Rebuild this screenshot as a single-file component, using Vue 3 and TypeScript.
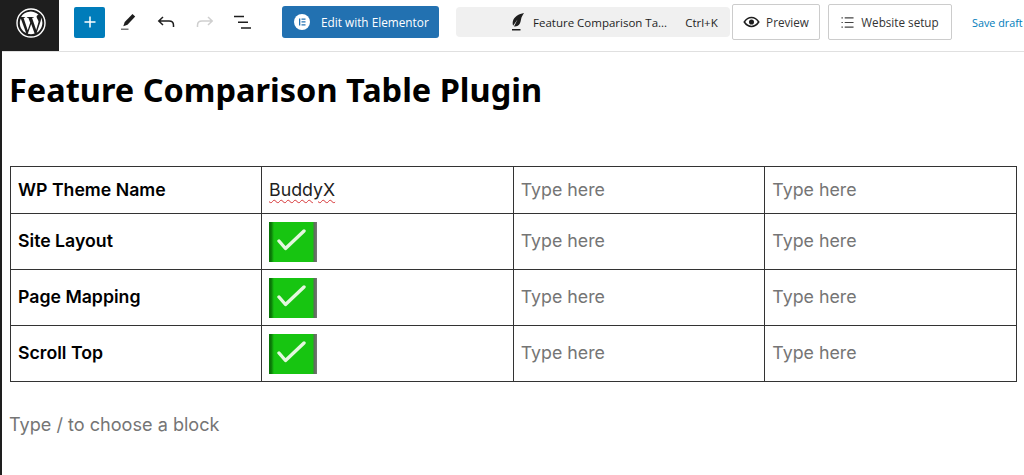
<script setup lang="ts">
const rows = [
  { name: 'Site Layout' },
  { name: 'Page Mapping' },
  { name: 'Scroll Top' },
];
</script>

<template>
  <div class="editor">
    <header class="topbar">
      <a class="wp-logo">
        <svg width="36" height="36" viewBox="0 0 36 36">
          <circle cx="18" cy="18" r="14" fill="none" stroke="#fff" stroke-width="1.4" />
          <path fill="#fff" d="M6.8 18c0 4.4 2.6 8.3 6.3 10.1L7.8 13.4A11 11 0 0 0 6.8 18zm18.8-.6c0-1.4-.5-2.3-.9-3-.6-.9-1.1-1.7-1.1-2.6 0-1 .8-2 1.9-2h.1A11.2 11.2 0 0 0 8.1 12h.7c1.2 0 3-.1 3-.1.6 0 .7.8.1.9 0 0-.6.1-1.3.1l4.1 12.3 2.5-7.5-1.8-4.8c-.6 0-1.2-.1-1.2-.1-.6 0-.5-.9.1-.9 0 0 1.9.1 3 .1s3-.1 3-.1c.6 0 .7.8.1.9 0 0-.6.1-1.3.1l4.1 12.2 1.1-3.8c.5-1.6.9-2.7.9-3.700zm-7.400 1.600L14.800 28.800a11.200 11.200 0 0 0 6.900-.2l-.1-.1zm9.700-6.400c0 .4.1.8.1 1.200 0 1.100-.2 2.400-.9 4l-3.400 9.900A11.200 11.200 0 0 0 28 12.600z" />
        </svg>
      </a>
      <div class="tools">
        <button class="add-btn">
          <svg width="16" height="16" viewBox="0 0 16 16"><path d="M8 2.500v11M2.500 8h11" stroke="#fff" stroke-width="1.500" /></svg>
        </button>
        <svg class="tool pen" width="24" height="24" viewBox="0 0 24 24"><path fill="#1e1e1e" d="M17.500 4 20.200 6.600 12.500 14.800 8.300 16.300 9.700 12z" /><path fill="#777" d="M6 18.500h7.500V20H6z" /></svg>
        <svg class="tool" width="24" height="24" viewBox="0 0 24 24"><path fill="none" stroke="#1e1e1e" stroke-width="1.500" d="M9 7 4.800 11 9 15M4.800 11H15c2.800 0 4.500 1.700 4.500 4.200V17" /></svg>
        <svg class="tool" width="24" height="24" viewBox="0 0 24 24"><path fill="none" stroke="#cfcfcf" stroke-width="1.500" d="M15 7 19.200 11 15 15M19.200 11H9c-2.800 0-4.500 1.700-4.500 4.200V17" /></svg>
        <svg class="tool list" width="24" height="24" viewBox="0 0 24 24"><path fill="none" stroke="#1e1e1e" stroke-width="1.500" d="M4 6.500h10M8 12.200h10M11 18h10" /></svg>
      </div>
      <button class="elementor-btn">
        <span class="el-icon"><svg width="14" height="14" viewBox="0 0 14 14"><path fill="#2271b1" d="M4 3.500h1.300v7H4zM6.500 3.500H10.500v1.300h-4zM6.500 6.300H10.500v1.300h-4zM6.500 9.200H10.500v1.300h-4z" /></svg></span>
        Edit with Elementor
      </button>
      <div class="command">
        <svg width="14" height="20" viewBox="0 0 14 20"><path fill="#1e1e1e" d="M13 1C8 2 2.800 4.500 1.800 9.500c-.3 1.600-.1 3 .3 4.200L6.500 7.500 3 14.500c2.500.3 4.800-.8 6-3.200.9-1.900.9-4 1.600-6C11.100 3.900 12.100 2.400 13 1zM1 17h8.500v1.500H1z" /></svg>
        <span class="command-title">Feature Comparison Ta...</span>
        <span class="shortcut">Ctrl+K</span>
      </div>
      <button class="outline-btn preview">
        <svg width="17" height="12" viewBox="0 0 20 14"><path fill="none" stroke="#1e1e1e" stroke-width="1.800" d="M1.500 7C4 3.200 6.800 1.800 10 1.800s6 1.400 8.500 5.200c-2.500 3.800-5.300 5.200-8.500 5.200S4 10.800 1.500 7z" /><circle cx="10" cy="7" r="3" fill="#1e1e1e" /></svg>
        Preview
      </button>
      <button class="outline-btn setup">
        <svg width="13" height="13" viewBox="0 0 14 14"><path fill="none" stroke="#444" stroke-width="1.300" d="M4 2h9.500M4 7h9.500M4 12h9.500" /><path fill="none" stroke="#444" stroke-width="1.300" d="M.5 2h1.500M.5 7h1.500M.5 12h1.500" /></svg>
        Website setup
      </button>
      <a class="save">Save draft</a>
    </header>
    <main class="content">
      <h1>Feature Comparison Table Plugin</h1>
      <table>
        <colgroup>
          <col class="col-name" />
          <col />
          <col />
          <col />
        </colgroup>
        <tbody>
          <tr class="first">
            <th>WP Theme Name</th>
            <td class="value"><span class="misspelt">BuddyX</span></td>
            <td>Type here</td>
            <td>Type here</td>
          </tr>
          <tr v-for="row in rows" :key="row.name">
            <th>{{ row.name }}</th>
            <td class="value">
              <span class="check">
                <svg width="48" height="40" viewBox="0 0 48 40"><path fill="none" stroke="#e4f7df" stroke-width="3.400" stroke-linecap="round" stroke-linejoin="round" d="M10 19l6.500 7.500L35 9" /></svg>
              </span>
            </td>
            <td>Type here</td>
            <td>Type here</td>
          </tr>
        </tbody>
      </table>
      <p class="appender">Type / to choose a block</p>
    </main>
  </div>
</template>

<style scoped>
.editor {
  width: 1024px;
  height: 475px;
  box-sizing: border-box;
  overflow: hidden;
  background: #fff;
  border-left: 2px solid #1e1e1e;
  font-family: "Open Sans", "Noto Sans", sans-serif;
  color: #1e1e1e;
}
.topbar {
  height: 52px;
  box-sizing: border-box;
  padding-bottom: 7px;
  display: flex;
  align-items: center;
  border-bottom: 1px solid #e0e0e0;
  white-space: nowrap;
}
.wp-logo {
  width: 57px;
  height: 51px;
  margin-bottom: -7px;
  flex: none;
  display: flex;
  align-items: center;
  justify-content: center;
  padding-bottom: 6px;
  box-sizing: border-box;
  background: #1e1e1e;
}
.tools {
  display: flex;
  align-items: center;
  gap: 15px;
  margin-left: 15px;
}
.pen {
  margin-left: -5px;
}
.list {
  margin-left: -2px;
}
.add-btn {
  width: 31px;
  height: 31px;
  border: 0;
  padding: 0;
  border-radius: 2px;
  background: #007cba;
  display: flex;
  align-items: center;
  justify-content: center;
}
.elementor-btn {
  margin-left: 28px;
  width: 157px;
  height: 32px;
  padding: 0 0 0 12px;
  border: 0;
  border-radius: 3px;
  background: #2271b1;
  color: #fff;
  font: 11.8px "Open Sans", sans-serif;
  display: flex;
  align-items: center;
  gap: 11px;
  flex: none;
}
.el-icon {
  width: 16px;
  height: 16px;
  border-radius: 50%;
  background: #fff;
  display: flex;
  align-items: center;
  justify-content: center;
}
.command {
  margin-left: 17px;
  width: 274px;
  height: 30px;
  flex: none;
  background: #f0f0f0;
  border-radius: 4px;
  display: flex;
  align-items: center;
  font-size: 11.5px;
  padding-left: 55px;
  box-sizing: border-box;
}
.command-title {
  margin-left: 8px;
}
.shortcut {
  margin-left: 18px;
}
.outline-btn {
  height: 36px;
  box-sizing: border-box;
  border: 1px solid #ccc;
  border-radius: 2px;
  background: #fff;
  color: #333;
  font: 11.7px "Open Sans", sans-serif;
  display: flex;
  align-items: center;
  justify-content: center;
  flex: none;
}
.preview {
  width: 88px;
  margin-left: 2px;
  gap: 6px;
}
.setup {
  width: 124px;
  margin-left: 8px;
  gap: 7px;
}
.save {
  margin-left: 20px;
  color: #007cba;
  font-size: 10.8px;
}
.content {
  padding: 0 0 0 8px;
}
h1 {
  margin: 19px 0 0 -1px;
  font: 700 32.500px/38px "Noto Sans", sans-serif;
  color: #000;
}
table {
  margin-top: 57px;
  width: 1007px;
  table-layout: fixed;
  border-collapse: collapse;
  font: 17.800px "Inter", "Lato", sans-serif;
}
.col-name {
  width: 251px;
}
th,
td {
  border: 1px solid #333;
  padding: 0 7px 2px;
  text-align: left;
  height: 56px;
  box-sizing: border-box;
  color: #757575;
}
th {
  color: #000;
  font-weight: 600;
  font-size: 17.700px;
}
.first th,
.first td {
  height: 47px;
}
.value {
  color: #1e1e1e;
}
.misspelt {
  text-decoration: underline wavy #d63638 1px;
  text-underline-offset: 3px;
}
.check {
  width: 48px;
  height: 40px;
  margin-bottom: -2px;
  display: block;
  background: linear-gradient(90deg, #0a7508 0, #0a7508 2px, #17c511 5px, #17c511 44px, #5b6b58 45px, #777 48px);
}
.check svg {
  display: block;
  filter: blur(0.4px);
}
.appender {
  margin: 31px 0 0 -1px;
  font: 18.100px "Inter", "Lato", sans-serif;
  color: #757575;
}
</style>
